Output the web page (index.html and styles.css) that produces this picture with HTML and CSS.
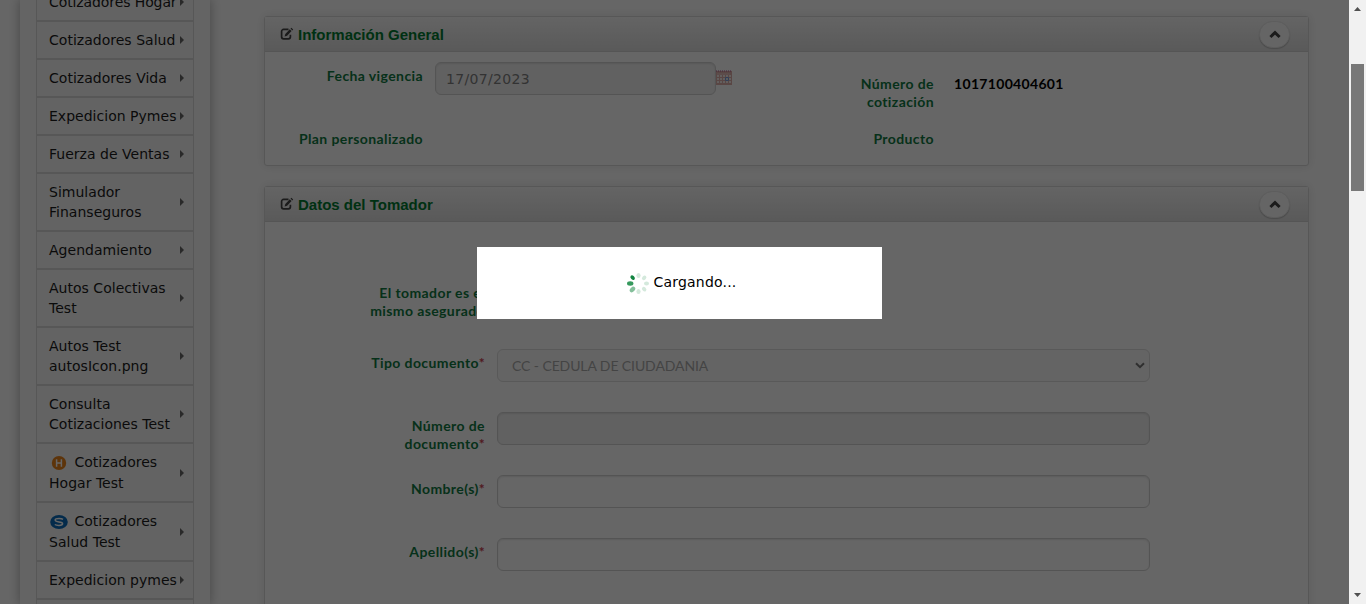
FILE: index.html
```html
<!DOCTYPE html>
<html lang="es">
<head>
<meta charset="utf-8">
<title>Cotizador</title>
<link rel="stylesheet" href="styles.css">
</head>
<body>
<svg class="defs" width="0" height="0">
  <symbol id="edit" viewBox="0 0 14 14"><path d="M8.500 2.400H3.600a2 2 0 0 0-2 2v5.400a2 2 0 0 0 2 2H8.400a2 2 0 0 0 2-2V7.800" fill="none" stroke="#444" stroke-width="1.700"/><path d="M4.600 9.600l.7-2.700L9.800 2.300l1.800 1.800-4.500 4.600zM10.500 1.600l.9-.9 1.800 1.800-.9.9z" fill="#444"/></symbol>
  <symbol id="up" viewBox="0 0 12 9"><path d="M1.400 7L6 2.600 10.600 7" fill="none" stroke="#444" stroke-width="3"/></symbol>
</svg>
<div class="window">
  <div class="page">
    <nav class="sidebar">
      <ul class="menu">
        <li class="item"><span class="name tight">Cotizadores Hogar</span></li>
        <li class="item"><span class="name">Cotizadores Salud</span></li>
        <li class="item"><span class="name">Cotizadores Vida</span></li>
        <li class="item"><span class="name">Expedicion Pymes</span></li>
        <li class="item"><span class="name">Fuerza de Ventas</span></li>
        <li class="item"><span class="name">Simulador<br>Finanseguros</span></li>
        <li class="item"><span class="name">Agendamiento</span></li>
        <li class="item"><span class="name">Autos Colectivas<br>Test</span></li>
        <li class="item"><span class="name">Autos Test<br>autosIcon.png</span></li>
        <li class="item"><span class="name">Consulta<br>Cotizaciones Test</span></li>
        <li class="item tall"><span class="name"><svg class="badge" width="20" height="16" viewBox="0 0 20 16"><ellipse cx="10" cy="8" rx="7.200" ry="7" fill="#e8821a"/><path d="M7.600 4.200v7.600M12.400 4.200v7.600M7.600 8h4.800" stroke="#fff" stroke-width="1.500"/></svg> Cotizadores<br>Hogar Test</span></li>
        <li class="item tall"><span class="name"><svg class="badge" width="20" height="16" viewBox="0 0 20 16"><ellipse cx="10" cy="8" rx="8.800" ry="7" fill="#0b6dbb"/><path d="M14 5.400C13 4.600 11.800 4.400 10 4.400 4.600 4.400 5.200 7.600 10 8 14.800 8.400 14.800 11.400 10 11.400 8 11.400 6.800 11.200 5.800 10.500" stroke="#fff" stroke-width="1.500" fill="none"/></svg> Cotizadores<br>Salud Test</span></li>
        <li class="item"><span class="name">Expedicion pymes</span></li>
        <li class="item"><span class="name">&nbsp;</span></li>
      </ul>
    </nav>
    <main class="content">
      <section class="panel general">
        <header class="head"><svg class="edit"><use href="#edit"/></svg><h2 class="title">Información General</h2><button class="toggle"><svg width="12" height="9"><use href="#up"/></svg></button></header>
        <div class="summary">
          <label class="label">Fecha vigencia</label>
          <div class="date"><input class="field date-field" value="17/07/2023" disabled><svg width="16" height="15" viewBox="0 0 16 15"><path d="M0 1h16v14H0z" fill="#cf857e"/><path d="M0 1h16" stroke="#805" stroke-opacity=".5" stroke-width="2" stroke-dasharray="1 1"/><path d="M1 4h13" stroke="#e5b8b3"/><path d="M1 6h14M1 9h14M1 12h14" stroke="#f5e5e3" stroke-width="2" stroke-dasharray="2 1"/><path d="M9.500 7.500h3v3h-3z" fill="#ddd" stroke="#3970c8"/></svg></div>
          <label class="label low">Número de<br>cotización</label>
          <output class="number">1017100404601</output>
          <label class="label">Plan personalizado</label><span></span>
          <label class="label">Producto</label><span></span>
        </div>
      </section>
      <section class="panel holder">
        <header class="head"><svg class="edit"><use href="#edit"/></svg><h2 class="title">Datos del Tomador</h2><button class="toggle"><svg width="12" height="9"><use href="#up"/></svg></button></header>
        <div class="form">
          <div class="row first"><label class="label">El tomador es el<br>mismo asegurado</label></div>
          <div class="row"><label class="label">Tipo documento<i class="req">*</i></label><div class="field select"><span>CC - CEDULA DE CIUDADANIA</span><svg width="10" height="7" viewBox="0 0 10 7"><path d="M1 1.200l4 4 4-4" fill="none" stroke="#777" stroke-width="2"/></svg></div></div>
          <div class="row"><label class="label">Número de<br>documento<i class="req">*</i></label><input class="field" disabled></div>
          <div class="row"><label class="label">Nombre(s)<i class="req">*</i></label><input class="field"></div>
          <div class="row"><label class="label">Apellido(s)<i class="req">*</i></label><input class="field"></div>
        </div>
      </section>
    </main>
  </div>
  <aside class="scrollbar"><svg width="7" height="4" viewBox="0 0 7 4"><path d="M0 4L3.500 0 7 4z" fill="#505050"/></svg><div class="thumb"></div><svg class="down" width="7" height="4" viewBox="0 0 7 4"><path d="M0 0h7L3.500 4z" fill="#505050"/></svg></aside>
</div>
<div class="overlay"></div>
<div class="dialog">
  <svg width="23" height="23" viewBox="-11.500 -11.500 23 23"><g fill="#d4e9dc"><ellipse cy="-8" rx="2.100" ry="2.500"/><ellipse cy="8" rx="2.100" ry="2.500"/><ellipse cx="8" rx="2.500" ry="2.100"/><ellipse cy="-8" rx="1.900" ry="2.500" transform="rotate(45)"/><ellipse cy="-8" rx="1.900" ry="2.500" transform="rotate(135)"/></g><ellipse cy="-8.500" rx="2.200" ry="3.200" transform="rotate(225)" fill="#84bf9b"/><ellipse cx="-8.300" rx="3.200" ry="2.200" fill="#36995d"/><ellipse cy="-8.300" rx="1.800" ry="2.600" transform="rotate(-45)" fill="#128440"/></svg>
  <span>Cargando...</span>
</div>
</body>
</html>
```
FILE: styles.css
```css
* { box-sizing: border-box; }
body { margin: 0; height: 604px; overflow: hidden; background: #fff; color: #000; font: 14px/20px "DejaVu Sans", Verdana, sans-serif; }
.defs { position: absolute; }
.window { display: flex; height: 604px; overflow: hidden; }
.page { flex: 1; display: flex; align-items: flex-start; padding-left: 20px; }
.sidebar { width: 190px; height: 604px; padding: 0 16px; background: #fbfbfb; box-shadow: 0 0 10px 1px #bbb; }
.menu { list-style: none; margin: -17px 0 0; padding: 0; }
.item { position: relative; width: 158px; height: 38px; padding: 8px 12px; border: 1px solid #dadada; background: #f8f8f8; display: flex; align-items: center; white-space: nowrap; }
.item:has(br) { height: 58px; }
.item.tall { height: 59px; line-height: 21px; }
.item::after { content: ""; position: absolute; right: 9px; top: calc(50% - 4px); border: 4px solid transparent; border-left-color: #666; border-right-width: 0; }
.name { letter-spacing: .02px; color: #1c1c1c; }
.tight { letter-spacing: -.1px; }
.badge { vertical-align: -4px; margin-right: 1px; }
.content { flex: 1; padding: 16px 40px 0 54px; }
.panel { border: 1px solid #d9d9d9; border-radius: 3px; background: #fff; box-shadow: 0 0 10px rgba(0,0,0,.1); }
.general { height: 150px; margin-bottom: 20px; }
.holder { height: 460px; }
.head { height: 35px; display: flex; align-items: center; padding: 0 18px 0 15px; border-bottom: 1px solid #d4d4d4; background: linear-gradient(#fafafa, #e0e0e0); }
.edit { width: 14px; height: 14px; margin-right: 4px; }
.title { margin: 0; padding-top: 1px; flex: 1; font: bold 15px/20px "Liberation Sans", Arial, sans-serif; letter-spacing: 0; color: #007a30; }
.toggle { width: 31px; height: 27px; padding: 0; border: 1px solid #e8e8e8; border-radius: 14px; background: #fdfdfd; box-shadow: 0 1px 1px #bbb; display: flex; align-items: center; justify-content: center; }
.label { font: bold 14px/18px Lato, sans-serif; letter-spacing: .4px; text-align: right; color: #107a43; }
.summary { display: grid; grid-template-columns: 158px 299px 188px 1fr; grid-template-rows: 63px 20px; column-gap: 12px; padding-top: 10px; }
.summary .label { padding-top: 5px; }
.summary .label.low { padding-top: 13px; }
.date { display: flex; align-items: flex-start; }
.date svg { flex: none; margin-top: 8px; opacity: .65; }
.field { width: 653px; height: 33px; border: 1px solid #d2d2d2; border-radius: 6px; background: #fff; box-shadow: inset 0 1px 2px rgba(0,0,0,.1); padding: 0 10px; font: 14px "DejaVu Sans", sans-serif; color: #808080; }
.field:disabled { background: #f3f3f3; }
.date-field { width: 281px; flex: none; letter-spacing: .32px; }
.number { padding: 13px 0 0 8px; font: bold 14px/18px Lato, sans-serif; letter-spacing: .32px; }
.form { padding-top: 57px; }
.row { display: flex; gap: 12px; height: 63px; }
.row .label { width: 220px; padding-top: 5px; }
.row.first { height: 70px; }
.select { display: flex; align-items: center; justify-content: space-between; padding: 0 4px 0 14px; border-color: #dedede; background: #fafafa; box-shadow: none; font-family: Lato, sans-serif; letter-spacing: -.1px; color: #aaa; }
.req { color: #c94250; font-style: normal; }
.scrollbar { width: 17px; background: #f1f1f1; display: flex; flex-direction: column; align-items: center; padding: 7px 0; }
.thumb { width: 13px; height: 127px; margin-top: 53px; background: #787878; }
.down { margin-top: auto; }
.overlay { position: absolute; inset: 0 17px 0 0; background: rgba(0,0,0,.6); }
.dialog { position: absolute; left: 477px; top: 247px; width: 405px; height: 72px; padding-left: 4px; background: #fff; display: flex; align-items: center; justify-content: center; gap: 4px; }
.dialog span { margin-top: -2px; letter-spacing: .2px; }
```
